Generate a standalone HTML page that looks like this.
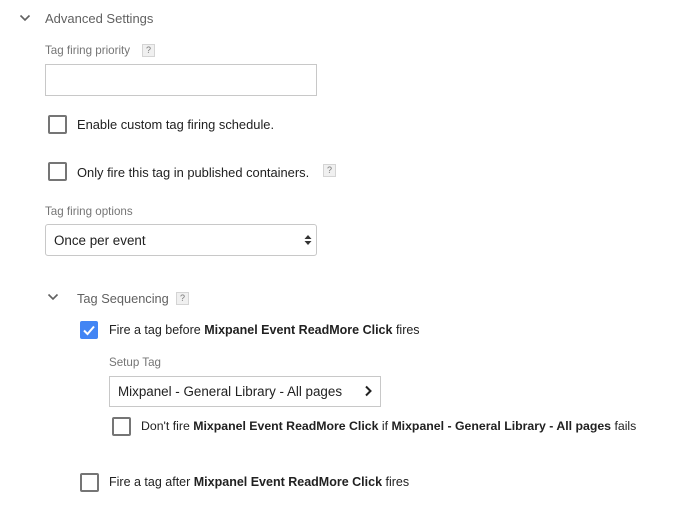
<!DOCTYPE html>
<html><head><style>
body{margin:0;width:685px;height:509px;background:#fff;font-family:"Liberation Sans",sans-serif;position:relative;overflow:hidden}
.a{position:absolute;white-space:nowrap}
.lbl{font-size:11.6px;color:#757575}
.t{font-size:12.5px;color:#212121}
.t2{font-size:12.9px;color:#212121}
.cb{position:absolute;width:15px;height:15px;border:2px solid #757575;border-radius:2px}
.q{position:absolute;width:11px;height:11px;border:1px solid #d4d4d4;background:#f0f0f0;font-size:9px;color:#777;text-align:center;line-height:11px}
b{font-weight:bold}
</style></head><body>
<svg class="a" style="left:19px;top:13px" width="12" height="10"><path d="M1.5 2.5 L6 7 L10.5 2.5" fill="none" stroke="#616161" stroke-width="1.6"/></svg>
<div class="a" style="left:45px;top:11px;font-size:13px;color:#616161">Advanced Settings</div>
<div class="a lbl" style="left:45px;top:44px">Tag firing priority</div>
<div class="q" style="left:142px;top:44px">?</div>
<div class="a" style="left:45px;top:64px;width:270px;height:30px;border:1px solid #c8c8c8"></div>
<div class="cb" style="left:48px;top:115px"></div>
<div class="a t2" style="left:77px;top:117px">Enable custom tag firing schedule.</div>
<div class="cb" style="left:48px;top:162px"></div>
<div class="a t2" style="left:77px;top:165px">Only fire this tag in published containers.</div>
<div class="q" style="left:323px;top:164px">?</div>
<div class="a lbl" style="left:45px;top:205px">Tag firing options</div>
<div class="a" style="left:45px;top:224px;width:270px;height:30px;border:1px solid #c8c8c8;border-radius:3px"></div>
<div class="a" style="left:54px;top:233px;font-size:13.4px;color:#212121">Once per event</div>
<svg class="a" style="left:304px;top:234px" width="8" height="12"><path d="M0.5 5 L4 1 L7.5 5Z M0.5 7 L4 11 L7.5 7Z" fill="#333"/></svg>
<svg class="a" style="left:47px;top:292px" width="12" height="10"><path d="M1.5 2.5 L6 7 L10.5 2.5" fill="none" stroke="#616161" stroke-width="1.6"/></svg>
<div class="a" style="left:77px;top:291px;font-size:12.8px;color:#616161">Tag Sequencing</div>
<div class="q" style="left:176px;top:292px">?</div>
<div class="a" style="left:80px;top:321px;width:18px;height:18px;background:#4285f4;border-radius:2px"></div>
<svg class="a" style="left:80px;top:321px" width="18" height="18"><path d="M4 9.5 L7.5 13 L14 5.5" fill="none" stroke="#fff" stroke-width="2"/></svg>
<div class="a t" style="left:109px;top:323px">Fire a tag before <b>Mixpanel Event ReadMore Click</b> fires</div>
<div class="a lbl" style="left:109px;top:356px">Setup Tag</div>
<div class="a" style="left:109px;top:376px;width:270px;height:29px;border:1px solid #c8c8c8"></div>
<div class="a" style="left:118px;top:384px;font-size:13.4px;color:#212121">Mixpanel - General Library - All pages</div>
<svg class="a" style="left:364px;top:385px" width="9" height="12"><path d="M2 1.5 L6.5 6 L2 10.5" fill="none" stroke="#222" stroke-width="2"/></svg>
<div class="cb" style="left:112px;top:417px"></div>
<div class="a" style="left:141px;top:419px;font-size:12.3px;color:#212121">Don't fire <b>Mixpanel Event ReadMore Click</b> if <b>Mixpanel - General Library - All pages</b> fails</div>
<div class="cb" style="left:80px;top:473px"></div>
<div class="a t" style="left:109px;top:475px">Fire a tag after <b>Mixpanel Event ReadMore Click</b> fires</div>
</body></html>
